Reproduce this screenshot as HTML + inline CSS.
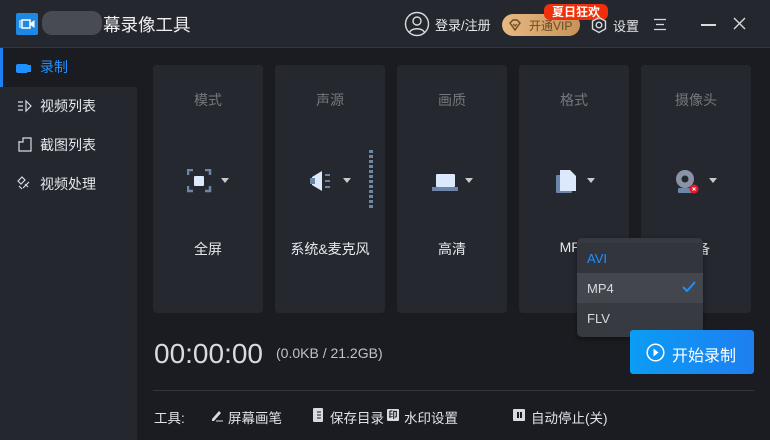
<!DOCTYPE html><html><head><meta charset="utf-8"><style>
*{margin:0;padding:0;box-sizing:border-box}
body{width:770px;height:440px;overflow:hidden;background:#1b1c21;font-family:"Liberation Sans","Noto Sans CJK SC",sans-serif;position:relative;color:#e6e8ee}
.hdr{position:absolute;left:0;top:0;width:770px;height:48px;background:#25272f;border-bottom:1px solid #34363e}
.side{position:absolute;left:0;top:48px;width:137px;height:392px;background:#25272f}
.item{position:absolute;left:0;width:137px;height:39px;font-size:14px;line-height:39px;padding-left:40px;color:#e6e8ee}
.card{position:absolute;top:65px;width:110px;height:248px;background:#262830;border-radius:4px}
.card .t{position:absolute;top:25px;width:100%;text-align:center;font-size:14px;color:#75777d}
.card .v{position:absolute;top:174px;width:100%;text-align:center;font-size:14px;color:#e6e8ee}
.card .ic{position:absolute;top:104px;left:34px}
.tri{position:absolute;width:0;height:0;border-left:4px solid transparent;border-right:4px solid transparent;border-top:5px solid #c8cad0}
.tool{position:absolute;top:407px;font-size:13.5px;color:#e0e2e8}
</style></head><body>
<div class="hdr">
 <div style="position:absolute;left:16px;top:13px;width:22px;height:22px;background:#1e88e5;border-radius:2px"></div>
 <svg style="position:absolute;left:19px;top:18px" width="16" height="12"><rect x="3" y="2" width="8" height="8" fill="none" stroke="#fff" stroke-width="1.5"/><path d="M1 2v8M11 6l4-3v6z" stroke="#fff" fill="#fff"/></svg>
 <div style="position:absolute;left:42px;top:11px;width:60px;height:24px;background:#53555c;border-radius:10px;opacity:.8"></div>
 <div style="position:absolute;left:103px;top:12px;font-size:17.5px;color:#f0f0f2">幕录像工具</div>
 <svg style="position:absolute;left:404px;top:11px" width="26" height="26"><circle cx="13" cy="13" r="11.5" fill="none" stroke="#d8dae0" stroke-width="1.4"/><circle cx="13" cy="10" r="4" fill="none" stroke="#d8dae0" stroke-width="1.4"/><path d="M5.5 21.5c2-5 13-5 15 0" fill="none" stroke="#d8dae0" stroke-width="1.4"/></svg>
 <div style="position:absolute;left:435px;top:15px;font-size:13px">登录/注册</div>
 <div style="position:absolute;left:502px;top:14px;width:78px;height:22px;border-radius:11px;background:linear-gradient(90deg,#e6b982,#c89358)"></div>
 <svg style="position:absolute;left:508px;top:18px" width="14" height="14"><path d="M2 5l3-3h4l3 3-5 7z" fill="none" stroke="#6b4a24" stroke-width="1.4"/><path d="M5 6l2 2 2-2" fill="none" stroke="#6b4a24" stroke-width="1.2"/></svg>
 <div style="position:absolute;left:529px;top:17px;font-size:12px;color:#6b4a24">开通VIP</div>
 <div style="position:absolute;left:544px;top:4px;width:64px;height:16px;background:#f0300a;border-radius:6px;color:#fff;font-size:12px;line-height:16px;text-align:center;font-weight:bold">夏日狂欢</div>
 <svg style="position:absolute;left:590px;top:16px" width="18" height="18"><path d="M9 1.5l6.5 3.7v7.6L9 16.5 2.5 12.8V5.2z" fill="none" stroke="#d8dae0" stroke-width="1.4"/><circle cx="9" cy="9" r="2.8" fill="none" stroke="#d8dae0" stroke-width="1.4"/></svg>
 <div style="position:absolute;left:613px;top:16px;font-size:13px">设置</div>
 <svg style="position:absolute;left:653px;top:18px" width="14" height="13"><path d="M1 1.5h12M3 6.5h8M1 11.5h12" stroke="#d8dae0" stroke-width="1.3"/></svg>
 <div style="position:absolute;left:701px;top:24px;width:15px;height:1.5px;background:#d8dae0"></div>
 <svg style="position:absolute;left:733px;top:17px" width="13" height="13"><path d="M1 1l11 11M12 1L1 12" stroke="#d8dae0" stroke-width="1.4"/></svg>
</div>
<div class="side">
 <div class="item" style="top:0;background:#1b1c21;color:#1e90ff"><div style="position:absolute;left:0;top:0;width:3px;height:39px;background:#1e7ff0"></div>录制</div>
 <div style="position:absolute;left:16px;top:16px;width:12px;height:9px;background:#1e90ff;border-radius:2px"></div><div style="position:absolute;left:27px;top:17px;width:4px;height:7px;background:#1e90ff"></div>
 <div class="item" style="top:39px">视频列表</div>
 <svg style="position:absolute;left:17px;top:51px" width="16" height="14"><path d="M1 3h5M1 7h5M1 11h5M9 2l5 5-5 5z" fill="none" stroke="#d8dae0" stroke-width="1.2"/></svg>
 <div class="item" style="top:78px">截图列表</div>
 <svg style="position:absolute;left:18px;top:89px" width="15" height="15"><path d="M1 4v10h12V1H5v4H1M5 1" fill="none" stroke="#d8dae0" stroke-width="1.2"/></svg>
 <div class="item" style="top:117px">视频处理</div>
 <svg style="position:absolute;left:16px;top:127px" width="16" height="16"><path d="M2 6l4-4 3 3-4 4zM9 9l3 3M7 13l6-6M3 11l3 3" fill="none" stroke="#d8dae0" stroke-width="1.2"/></svg>
</div>
<div class="card" style="left:153px"><div class="t">模式</div>
 <svg class="ic" width="30" height="24" style="left:34px"><path d="M1 6V1h5M18 1h5v5M23 17v5h-5M6 22H1v-5" fill="none" stroke="#6d85a8" stroke-width="2.5"/><rect x="7" y="7" width="10" height="10" rx="1" fill="#dce8fb"/></svg>
 <div class="tri" style="left:68px;top:113px"></div><div class="v">全屏</div></div>
<div class="card" style="left:275px"><div class="t">声源</div>
 <svg class="ic" width="30" height="24"><path d="M3 8l10-6v20L3 16z" fill="#dce8fb"/><path d="M1 9v6l5 0V9z" fill="#6d85a8"/><path d="M16 6h5M16 12h5M16 18h5" stroke="#6d85a8" stroke-width="2"/></svg>
 <div class="tri" style="left:68px;top:113px"></div>
 <div style="position:absolute;left:94px;top:85px;width:4px;height:58px;background:repeating-linear-gradient(#6d85a8 0 3px,transparent 3px 5px)"></div>
 <div class="v">系统&amp;麦克风</div></div>
<div class="card" style="left:397px"><div class="t">画质</div>
 <svg class="ic" width="30" height="24"><rect x="5" y="5" width="19" height="13" rx="1" fill="#dce8fb"/><rect x="1" y="18" width="26" height="4" fill="#6d85a8"/></svg>
 <div class="tri" style="left:68px;top:113px"></div><div class="v">高清</div></div>
<div class="card" style="left:519px"><div class="t">格式</div>
 <svg class="ic" width="30" height="26" style="left:36px"><rect x="1" y="6" width="16" height="18" rx="1" fill="#6d85a8"/><path d="M5 1h10l6 6v15H5z" fill="#dce8fb"/></svg>
 <div class="tri" style="left:68px;top:113px"></div><div class="v">MP4</div></div>
<div class="card" style="left:641px"><div class="t">摄像头</div>
 <svg class="ic" width="30" height="26"><circle cx="10" cy="10" r="9" fill="#8a94a6"/><circle cx="10" cy="10" r="3.5" fill="#262830"/><rect x="3" y="19" width="14" height="5" rx="1" fill="#6d85a8"/><circle cx="19" cy="20" r="4.5" fill="#e8192c"/><path d="M17.5 18.5l3 3M20.5 18.5l-3 3" stroke="#fff" stroke-width="1"/></svg>
 <div class="tri" style="left:68px;top:113px"></div><div class="v">设备</div></div>
<div style="position:absolute;left:577px;top:238px;width:126px;height:99px;background:#383a42;border-radius:5px;box-shadow:0 2px 6px rgba(0,0,0,.4)"></div>
<div style="position:absolute;left:577px;top:243px;width:126px;height:30px;background:#33353c"></div>
<div style="position:absolute;left:577px;top:273px;width:126px;height:30px;background:#44464e"></div>
<div style="position:absolute;left:587px;top:251px;font-size:13px;color:#1e90ff">AVI</div>
<div style="position:absolute;left:587px;top:281px;font-size:13px;color:#d8dae0">MP4</div>
<svg style="position:absolute;left:682px;top:281px" width="14" height="11"><path d="M1 6l4 4 8-9" fill="none" stroke="#1e90ff" stroke-width="2"/></svg>
<div style="position:absolute;left:587px;top:311px;font-size:13px;color:#d8dae0">FLV</div>
<div style="position:absolute;left:154px;top:338px;font-size:28px;color:#d8dae0">00:00:00</div>
<div style="position:absolute;left:276px;top:345px;font-size:14px;color:#c0c2c8">(0.0KB / 21.2GB)</div>
<div style="position:absolute;left:630px;top:330px;width:124px;height:44px;border-radius:3px;background:linear-gradient(90deg,#0b9cf5,#1e7ff0)"></div>
<svg style="position:absolute;left:646px;top:343px" width="19" height="19"><circle cx="9.5" cy="9.5" r="8.3" fill="none" stroke="#fff" stroke-width="1.5"/><path d="M7.5 5.5l5 4-5 4z" fill="#fff"/></svg>
<div style="position:absolute;left:672px;top:342px;font-size:16px;color:#fff">开始录制</div>
<div style="position:absolute;left:153px;top:390px;width:601px;height:1px;background:#34363e"></div>
<div class="tool" style="left:154px">工具:</div>
<svg style="position:absolute;left:210px;top:409px" width="14" height="13"><path d="M2 10l7-8 2 2-7 8H2z" fill="#d8dae0"/><path d="M6 12h7" stroke="#d8dae0"/></svg>
<div class="tool" style="left:228px">屏幕画笔</div>
<svg style="position:absolute;left:313px;top:408px" width="10" height="14"><rect width="10" height="14" rx="1" fill="#d8dae0"/><path d="M4 4h4M4 7h4M4 10h4" stroke="#1b1c21"/></svg>
<div class="tool" style="left:330px">保存目录</div>
<div style="position:absolute;left:387px;top:409px;width:12px;height:12px;background:#d8dae0;border-radius:1px;font-size:9px;color:#1b1c21;text-align:center;line-height:12px;font-weight:bold">印</div>
<div class="tool" style="left:404px">水印设置</div>
<div style="position:absolute;left:513px;top:409px;width:12px;height:12px;background:#d8dae0;border-radius:1px"></div>
<div style="position:absolute;left:517px;top:412px;width:1.5px;height:6px;background:#1b1c21"></div><div style="position:absolute;left:520px;top:412px;width:1.5px;height:6px;background:#1b1c21"></div>
<div class="tool" style="left:531px">自动停止(关)</div>
</body></html>
